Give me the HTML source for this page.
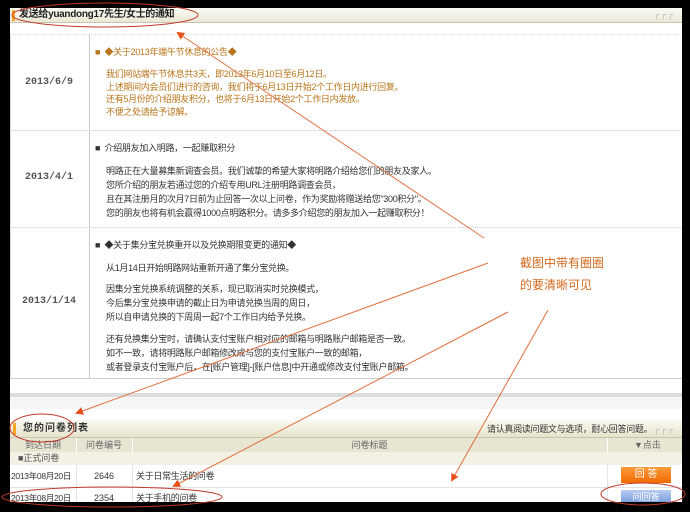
<!DOCTYPE html>
<html><head><meta charset="utf-8"><style>
*{margin:0;padding:0;box-sizing:border-box}
body{width:690px;height:512px;background:#000;position:relative;overflow:hidden;font-family:"Liberation Sans","Noto Sans CJK SC",sans-serif;font-size:9px;color:#333}
.a{position:absolute}
.box{left:10px;top:8px;width:672px;height:494px;background:#fff}
.t{white-space:nowrap;line-height:14px}
.p{letter-spacing:-0.3px}
.date{font-family:"Liberation Mono","Noto Sans CJK SC",monospace;font-weight:bold;font-size:10px;color:#555;width:78px;text-align:center}
.or{color:#b8741a}
</style></head><body>
<div class="a box"></div>
<div class="a" style="left:10px;top:8px;width:672px;height:15px;background:linear-gradient(#fbfbf3,#e9e8d6);border-bottom:1px solid #c8c6ae"></div>
<div class="a" style="left:12px;top:10px;width:3px;height:11px;background:#f5a623"></div>
<div class="a t" style="left:19px;top:8px;font-weight:bold;font-size:10px;color:#222;letter-spacing:-0.3px">发送给yuandong17先生/女士的通知</div>
<div class="a t" style="left:654px;top:8px;color:#aaa;font-size:8px;letter-spacing:1px">┌┌┌</div>
<div class="a" style="left:10px;top:34px;width:672px;border-top:1px dotted #ddd"></div>
<div class="a" style="left:89px;top:34px;height:345px;border-left:1px solid #ccc"></div>
<div class="a" style="left:10px;top:130px;width:672px;border-top:1px dotted #ccc"></div>
<div class="a" style="left:10px;top:227px;width:672px;border-top:1px dotted #ccc"></div>
<div class="a" style="left:10px;top:378px;width:672px;border-top:1px solid #ccc"></div>
<div class="a" style="left:10px;top:34px;height:345px;border-left:1px solid #ddd"></div>
<!-- row1 -->
<div class="a date t" style="left:10px;top:76px">2013/6/9</div>
<div class="a t p or" style="left:95px;top:45px">■ &nbsp;◆关于2013年端午节休息的公告◆</div>
<div class="a t p or" style="left:106px;top:68px;line-height:12.5px">我们网站端午节休息共3天，即2013年6月10日至6月12日。<br>上述期间内会员们进行的咨询，我们将于6月13日开始2个工作日内进行回复。<br>还有5月份的介绍朋友积分，也将于6月13日开始2个工作日内发放。<br>不便之处请给予谅解。</div>
<!-- row2 -->
<div class="a date t" style="left:10px;top:171px">2013/4/1</div>
<div class="a t p" style="left:95px;top:141px">■ &nbsp;介绍朋友加入明路，一起赚取积分</div>
<div class="a t p" style="left:106px;top:164px">明路正在大量募集新调查会员。我们诚挚的希望大家将明路介绍给您们的朋友及家人。<br>您所介绍的朋友若通过您的介绍专用URL注册明路调查会员，<br>且在其注册月的次月7日前为止回答一次以上问卷，作为奖励将赠送给您"300积分"。<br>您的朋友也将有机会赢得1000点明路积分。请多多介绍您的朋友加入一起赚取积分！</div>
<!-- row3 -->
<div class="a date t" style="left:10px;top:295px">2013/1/14</div>
<div class="a t p" style="left:95px;top:238px">■ &nbsp;◆关于集分宝兑换重开以及兑换期限变更的通知◆</div>
<div class="a t p" style="left:106px;top:261px">从1月14日开始明路网站重新开通了集分宝兑换。</div>
<div class="a t p" style="left:106px;top:282px">因集分宝兑换系统调整的关系，现已取消实时兑换模式，<br>今后集分宝兑换申请的截止日为申请兑换当周的周日，<br>所以自申请兑换的下周周一起7个工作日内给予兑换。</div>
<div class="a t p" style="left:106px;top:332px">还有兑换集分宝时，请确认支付宝账户相对应的邮箱与明路账户邮箱是否一致。<br>如不一致，请将明路账户邮箱修改成与您的支付宝账户一致的邮箱，<br>或者登录支付宝账户后，在[账户管理]-[账户信息]中开通或修改支付宝账户邮箱。</div>
<!-- gray band -->
<div class="a" style="left:10px;top:393px;width:672px;height:4px;background:#ddd"></div>
<div class="a" style="left:10px;top:397px;width:672px;height:12px;background:#f6f6f6"></div>
<!-- list header -->
<div class="a" style="left:10px;top:420px;width:672px;height:18px;background:linear-gradient(#fbfaf0,#e6e3cc);border-bottom:1px solid #c8c5a8"></div>
<div class="a" style="left:13px;top:423px;width:3px;height:12px;background:#f5a623"></div>
<div class="a t" style="left:23px;top:422px;font-weight:bold;font-size:10px;color:#333;letter-spacing:1px">您的问卷列表</div>
<div class="a t p" style="left:487px;top:422px;color:#333">请认真阅读问题文与选项，耐心回答问题。</div>
<div class="a t" style="left:654px;top:423px;color:#aaa;font-size:8px;letter-spacing:1px">┌┌┌</div>
<div class="a" style="left:10px;top:438px;width:672px;height:14px;background:#e8e5d3"></div>
<div class="a" style="left:10px;top:452px;width:672px;height:13px;background:#f3f1e4"></div>
<div class="a t" style="left:10px;top:438px;width:66px;text-align:center;color:#666">到达日期</div>
<div class="a t" style="left:76px;top:438px;width:56px;text-align:center;color:#666">问卷编号</div>
<div class="a t" style="left:132px;top:438px;width:475px;text-align:center;color:#666">问卷标题</div>
<div class="a t" style="left:634px;top:438px;color:#666">▼点击</div>
<div class="a" style="left:76px;top:438px;height:14px;border-left:1px solid #fff"></div>
<div class="a" style="left:132px;top:438px;height:14px;border-left:1px solid #fff"></div>
<div class="a" style="left:607px;top:438px;height:14px;border-left:1px solid #fff"></div>
<div class="a t" style="left:18px;top:451px;color:#555">■正式问卷</div>
<div class="a" style="left:10px;top:487px;width:672px;border-top:1px solid #e3e3e3"></div>
<div class="a" style="left:76px;top:465px;height:37px;border-left:1px solid #e3e3e3"></div>
<div class="a" style="left:132px;top:465px;height:37px;border-left:1px solid #e3e3e3"></div>
<div class="a" style="left:607px;top:465px;height:37px;border-left:1px solid #e3e3e3"></div>
<div class="a t p" style="left:11px;top:469px;font-size:8.5px">2013年08月20日</div>
<div class="a t" style="left:76px;top:469px;width:56px;text-align:center">2646</div>
<div class="a t p" style="left:136px;top:469px">关于日常生活的问卷</div>
<div class="a t" style="left:621px;top:467px;width:50px;height:16px;background:linear-gradient(#ff9a3c,#f06a00);color:#fff;text-align:center;line-height:16px;font-size:10px">回 答</div>
<div class="a t p" style="left:11px;top:491px;font-size:8.5px">2013年08月20日</div>
<div class="a t" style="left:76px;top:491px;width:56px;text-align:center">2354</div>
<div class="a t p" style="left:136px;top:491px">关于手机的问卷</div>
<div class="a t" style="left:621px;top:490px;width:50px;height:12px;background:linear-gradient(#b8ccf0,#7fa0e0);color:#fff;text-align:center;line-height:14px;overflow:hidden">问回答</div>
<div class="a" style="left:682px;top:0;width:8px;height:512px;background:#000"></div>
<div class="a" style="left:0;top:502px;width:690px;height:10px;background:#000"></div>
<!-- annotations -->
<div class="a t" style="left:520px;top:252px;color:#d2691e;font-size:12px;line-height:22px">截图中带有圈圈<br>的要清晰可见</div>
<svg class="a" style="left:0;top:0" width="690" height="512">
<defs><marker id="m" markerWidth="8" markerHeight="8" refX="6" refY="4" orient="auto"><path d="M0,0 L8,4 L0,8 Z" fill="#e8501a"/></marker></defs>
<g stroke="#e07040" stroke-width="1" fill="none">
<line x1="484" y1="238" x2="178" y2="33" marker-end="url(#m)"/>
<line x1="488" y1="263" x2="77" y2="413" marker-end="url(#m)"/>
<line x1="508" y1="312" x2="174" y2="486" marker-end="url(#m)"/>
<line x1="548" y1="310" x2="452" y2="480" marker-end="url(#m)"/>
<ellipse cx="105" cy="15" rx="93" ry="12" stroke="#c0392b"/>
<ellipse cx="42" cy="428" rx="32" ry="14" stroke="#c0392b"/>
<ellipse cx="112" cy="497" rx="110" ry="10" stroke="#c0392b"/>
<ellipse cx="643" cy="494" rx="42" ry="11" stroke="#c0392b"/>
</g></svg>
</body></html>
